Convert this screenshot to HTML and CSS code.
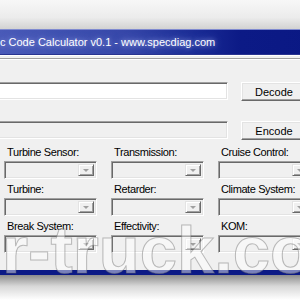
FILE: index.html
```html
<!DOCTYPE html>
<html lang="en">
<head>
    <meta charset="UTF-8">
    <title>Diagnostic Code Calculator v0.1</title>
    <link rel="stylesheet" href="styles.css">
</head>
<body>
    <div class="desktop">
        <div class="top-shade"></div>
        <div class="window">
            <div class="titlebar">
                <span class="title">c Code Calculator v0.1 - www.specdiag.com</span>
            </div>
            <div class="client">
                <div class="separator"></div>

                <div class="code-row first">
                    <div class="field"></div>
                    <button class="btn">Decode</button>
                </div>
                <div class="code-row">
                    <div class="field disabled"></div>
                    <button class="btn">Encode</button>
                </div>

                <div class="options">
                    <div class="opt">
                        <label>Turbine Sensor:</label>
                        <div class="combo"><span class="drop"></span></div>
                    </div>
                    <div class="opt">
                        <label>Transmission:</label>
                        <div class="combo"><span class="drop"></span></div>
                    </div>
                    <div class="opt">
                        <label>Cruise Control:</label>
                        <div class="combo"><span class="drop"></span></div>
                    </div>
                    <div class="opt">
                        <label>Turbine:</label>
                        <div class="combo"><span class="drop"></span></div>
                    </div>
                    <div class="opt">
                        <label>Retarder:</label>
                        <div class="combo"><span class="drop"></span></div>
                    </div>
                    <div class="opt">
                        <label>Climate System:</label>
                        <div class="combo"><span class="drop"></span></div>
                    </div>
                    <div class="opt">
                        <label>Break System:</label>
                        <div class="combo"><span class="drop"></span></div>
                    </div>
                    <div class="opt">
                        <label>Effectivity:</label>
                        <div class="combo"><span class="drop"></span></div>
                    </div>
                    <div class="opt">
                        <label>KOM:</label>
                        <div class="combo"><span class="drop"></span></div>
                    </div>
                </div>
            </div>
        </div>
        <div class="bottom-shade"></div>

        <!-- site watermark stamped over the screenshot -->
        <div class="watermark">r-truck.co</div>
    </div>
</body>
</html>
```

FILE: styles.css
```css
body {
    margin: 0;
    background: #fff;
    font-family: "Liberation Sans", Arial, sans-serif;
    overflow: hidden;
}
.desktop {
    position: relative;
    width: 300px;
    height: 300px;
    overflow: hidden;
    display: flex;
    flex-direction: column;
}
.top-shade {
    height: 29px;
    flex: none;
    background: linear-gradient(#f7f7f7, #ececec 60%, #d2d2d2);
}
.window {
    width: 320px;
    flex: none;
}
.titlebar {
    box-sizing: border-box;
    height: 26px;
    display: flex;
    align-items: center;
    border-top: 1px solid #7f8ad0;
    border-bottom: 1px solid #2a3490;
    background: linear-gradient(to right, #4a5ab8, #3646a8 40%, #1a2a94 62%, #0c1a86 75%, #0a1884);
}
.title {
    color: #fff;
    font-size: 11px;
    white-space: nowrap;
    text-shadow: 0 0 4px #8a96dc, 0 0 8px #7080d0;
}
.client {
    box-sizing: border-box;
    height: 220px;
    background: #f0f0f0;
    border-top: 1px solid #fff;
    border-bottom: 5px solid #0c1a86;
}
.separator {
    margin-top: 2px;
    height: 0;
    border-top: 1px solid #a0a0a0;
    border-bottom: 1px solid #fff;
}
.code-row {
    display: flex;
    align-items: flex-start;
    padding-right: 13px;
    margin-top: 20px;
}
.code-row.first {
    margin-top: 22px;
}
.field {
    flex: 1;
    margin-left: -20px;
    height: 18px;
    box-sizing: border-box;
    background: #fff;
    border: 1px solid;
    border-color: #a0a0a0 #fff #fff #a0a0a0;
    box-shadow: inset 1px 1px 0 #696969, inset -1px -1px 0 #e3e3e3;
}
.field.disabled {
    background: #f0f0f0;
}
.btn {
    width: 66px;
    height: 19px;
    margin-left: 13px;
    padding: 0;
    box-sizing: border-box;
    font-family: inherit;
    font-size: 11px;
    color: #000;
    background: #f0f0f0;
    border: 1px solid;
    border-color: #fff #696969 #696969 #fff;
    box-shadow: inset -1px -1px 0 #a0a0a0, inset 1px 1px 0 #e3e3e3;
}
.options {
    display: grid;
    grid-template-columns: repeat(3, 93px);
    column-gap: 14px;
    row-gap: 4px;
    margin: 6px 0 0 4px;
}
.opt label {
    display: block;
    height: 13px;
    line-height: 13px;
    padding-left: 3px;
    margin-bottom: 2px;
    font-size: 11px;
    letter-spacing: -0.4px;
    color: #000;
    white-space: nowrap;
}
.combo {
    height: 18px;
    box-sizing: border-box;
    display: flex;
    justify-content: flex-end;
    background: #f0f0f0;
    border: 1px solid;
    border-color: #a0a0a0 #fff #fff #a0a0a0;
    box-shadow: inset 1px 1px 0 #696969, inset -1px -1px 0 #e3e3e3;
    padding: 2px;
}
.drop {
    width: 16px;
    box-sizing: border-box;
    display: flex;
    align-items: center;
    justify-content: center;
    background: #f0f0f0;
    border: 1px solid;
    border-color: #e3e3e3 #696969 #696969 #e3e3e3;
    box-shadow: inset 1px 1px 0 #fff, inset -1px -1px 0 #a0a0a0;
}
.drop::after {
    content: "";
    border-left: 3px solid transparent;
    border-right: 3px solid transparent;
    border-top: 3px solid #a0a0a0;
}
.bottom-shade {
    flex: 1;
    background: linear-gradient(#8c8c8c, #d8d8d8 45%, #fff);
}
.watermark {
    position: absolute;
    left: 2px;
    top: 216px;
    font-size: 67px;
    font-weight: bold;
    line-height: 1;
    white-space: nowrap;
    color: rgba(255, 255, 255, 0.45);
    -webkit-text-stroke: 1px rgba(110, 110, 110, 0.45);
    pointer-events: none;
}
```
